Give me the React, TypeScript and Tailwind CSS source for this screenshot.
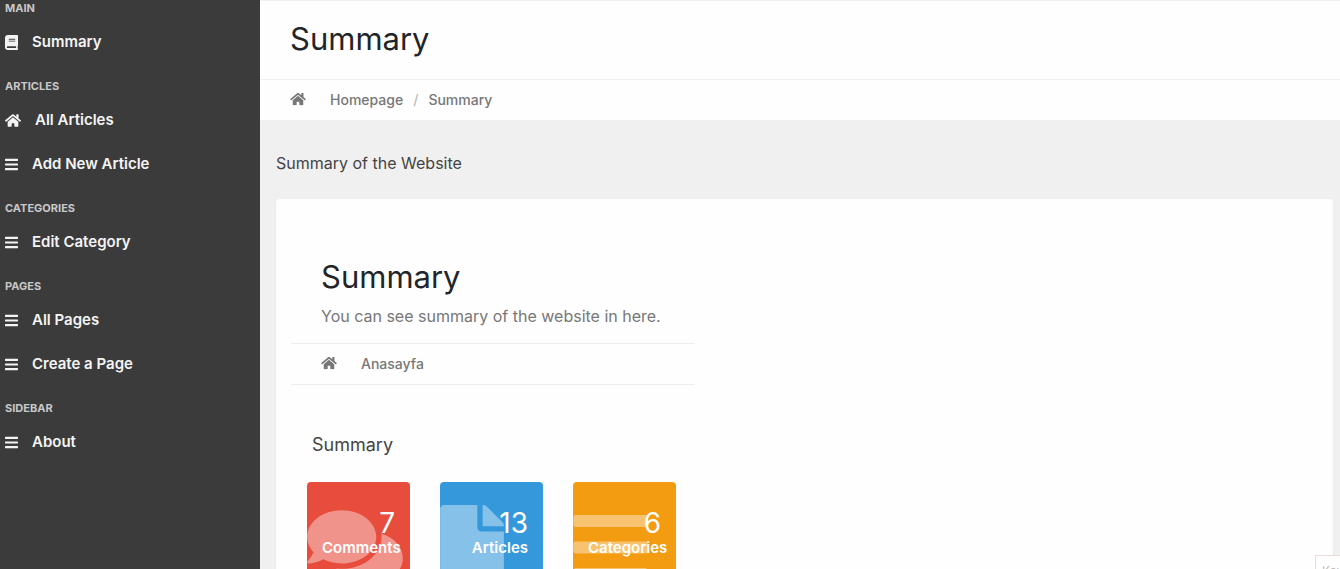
import type { ComponentType } from 'react'
import { FaBars, FaBook, FaComments, FaFile, FaHome } from 'react-icons/fa'

type Icon = ComponentType<{ className?: string }>

const menu: { title: string; items: { label: string; icon: Icon; iconClass: string }[] }[] = [
  { title: 'MAIN', items: [{ label: 'Summary', icon: FaBook, iconClass: 'w-[13px]' }] },
  {
    title: 'ARTICLES',
    items: [
      { label: 'All Articles', icon: FaHome, iconClass: 'w-4' },
      { label: 'Add New Article', icon: FaBars, iconClass: 'w-[13px]' },
    ],
  },
  { title: 'CATEGORIES', items: [{ label: 'Edit Category', icon: FaBars, iconClass: 'w-[13px]' }] },
  {
    title: 'PAGES',
    items: [
      { label: 'All Pages', icon: FaBars, iconClass: 'w-[13px]' },
      { label: 'Create a Page', icon: FaBars, iconClass: 'w-[13px]' },
    ],
  },
  { title: 'SIDEBAR', items: [{ label: 'About', icon: FaBars, iconClass: 'w-[13px]' }] },
]

const stats: { value: number; label: string; icon: Icon; iconClass: string; color: string }[] = [
  { value: 7, label: 'Comments', icon: FaComments, iconClass: 'w-24', color: 'bg-[#e74c3c]' },
  { value: 13, label: 'Articles', icon: FaFile, iconClass: 'w-16', color: 'bg-[#3498db]' },
  { value: 6, label: 'Categories', icon: FaBars, iconClass: 'w-[75px]', color: 'bg-[#f39c12]' },
]

function Sidebar() {
  return (
    <nav className="w-[260px] shrink-0 bg-[#3b3b3b] px-[5px]">
      {menu.map(({ title, items }) => (
        <section key={title} className="pt-3.5 first:pt-0">
          <h2 className="pb-1 text-[11px] leading-4 font-bold text-[#c8c8c8]">{title}</h2>
          <ul>
            {items.map(({ label, icon: ItemIcon, iconClass }) => (
              <li key={label}>
                <a href="#" className="flex h-11 items-center gap-3.5 text-[15px] font-semibold text-[#f4f4f4]">
                  <ItemIcon className={`h-[15px] ${iconClass}`} />
                  {label}
                </a>
              </li>
            ))}
          </ul>
        </section>
      ))}
    </nav>
  )
}

function StatCard({ value, label, icon: StatIcon, iconClass, color }: (typeof stats)[number]) {
  return (
    <a href="#" className={`relative block h-[118px] w-[103px] overflow-hidden rounded p-[15px] text-right text-white ${color}`}>
      <StatIcon className={`absolute top-[23px] left-0 h-[85px] max-w-none text-white/40 ${iconClass}`} />
      <div className="relative pt-2.5">
        <p className="text-[28px] leading-8">{value}</p>
        <p className="text-[15px] leading-[18px] font-semibold">{label}</p>
      </div>
    </a>
  )
}

export default function App() {
  return (
    <div className="relative flex h-screen overflow-hidden bg-[#f0f0f0] font-['Inter','Liberation_Sans',sans-serif]">
      <Sidebar />
      <main className="min-w-0 flex-1">
        <header className="bg-[#fefefe]">
          <div className="h-20 border-y border-[#f0f0f0] px-[30px] pt-5">
            <h1 className="text-[31px] leading-9 text-[#212529]">Summary</h1>
          </div>
          <nav aria-label="Breadcrumb" className="flex h-10 items-center px-[30px] pb-0.5 text-[14px] font-medium text-[#777777]">
            <a href="#" aria-label="Home">
              <FaHome className="h-[14px] w-4" />
            </a>
            <a href="#" className="ml-6">Homepage</a>
            <span className="mx-2.5 text-[#bbbbbb]">/</span>
            <a href="#">Summary</a>
          </nav>
        </header>

        <div className="pt-8 pr-[7px] pl-4">
          <h2 className="text-[16px] leading-[22px] text-[#444444]">Summary of the Website</h2>
          <div className="mt-[25px] rounded bg-[#fefefe] px-[15px] pt-[60px] pb-8 shadow-xs">
            <section className="w-[403px]">
              <div className="px-[30px]">
                <h2 className="text-[31px] leading-9 text-[#212529]">Summary</h2>
                <p className="mt-2.5 pb-4 text-[16px] leading-[22px] whitespace-nowrap text-[#777777]">
                  You can see summary of the website in here.
                </p>
              </div>
              <div className="flex h-[42px] items-center border-y border-[#eeeeee] px-[30px] pb-0.5 text-[14px] font-medium text-[#777777]">
                <FaHome className="mr-6 h-[14px] w-4" />
                <a href="#">Anasayfa</a>
              </div>
            </section>
            <section className="px-4 pt-12">
              <h3 className="px-[5px] text-[18px] leading-6 text-[#444444]">Summary</h3>
              <div className="mt-[25px] flex gap-[30px]">
                {stats.map((stat) => (
                  <StatCard key={stat.label} {...stat} />
                ))}
              </div>
            </section>
          </div>
        </div>
      </main>
      <div className="absolute right-0 bottom-0 h-[14px] w-[25px] overflow-hidden border-t border-l border-[#e9dcd8] bg-[#fefefe] pt-2 pl-1.5 text-[12px] leading-[14px] text-[#c4bcbc]">
        Kay
      </div>
    </div>
  )
}
